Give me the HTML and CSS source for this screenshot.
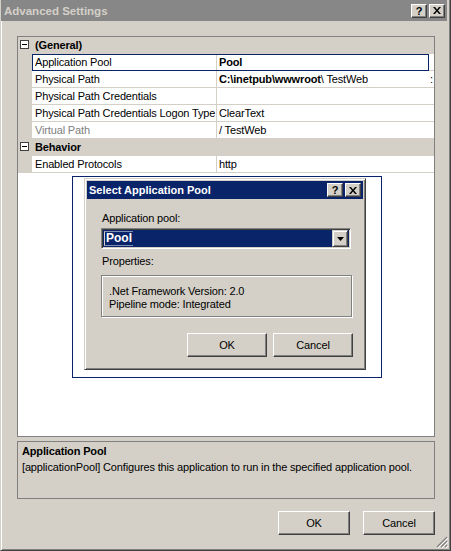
FILE: index.html
```html
<!DOCTYPE html>
<html>
<head>
<meta charset="utf-8">
<link rel="stylesheet" href="styles.css">
</head>
<body>
<div class="window">
  <div class="titlebar">
    <span class="title">Advanced Settings</span>
    <div class="capbtns">
      <span class="capbtn help">?</span>
      <span class="capbtn close"><svg width="8" height="7" viewBox="0 0 8 7"><path d="M0 0L2 0L4 2.5L6 0L8 0L5 3.5L8 7L6 7L4 4.5L2 7L0 7L3 3.5Z" fill="#000"/></svg></span>
    </div>
  </div>
  <div class="content">
    <div class="grid">
      <div class="row cat">
        <span class="margin"><span class="toggle"></span></span>
        <span class="catname">(General)</span>
      </div>
      <div class="row selected">
        <span class="margin"></span>
        <span class="label">Application Pool</span>
        <span class="value"><b>Pool</b></span>
      </div>
      <div class="row">
        <span class="margin"></span>
        <span class="label">Physical Path</span>
        <span class="value"><b>C:\inetpub\wwwroot</b>\ TestWeb<span class="trunc">:</span></span>
      </div>
      <div class="row">
        <span class="margin"></span>
        <span class="label">Physical Path Credentials</span>
        <span class="value"></span>
      </div>
      <div class="row">
        <span class="margin"></span>
        <span class="label">Physical Path Credentials Logon Type</span>
        <span class="value">ClearText</span>
      </div>
      <div class="row">
        <span class="margin"></span>
        <span class="label disabled">Virtual Path</span>
        <span class="value">/ TestWeb</span>
      </div>
      <div class="row cat">
        <span class="margin"><span class="toggle"></span></span>
        <span class="catname">Behavior</span>
      </div>
      <div class="row">
        <span class="margin"></span>
        <span class="label">Enabled Protocols</span>
        <span class="value">http</span>
      </div>

      <div class="focusrect">
        <div class="dialog">
          <div class="dtitlebar">
            <span class="dtitle">Select Application Pool</span>
            <div class="capbtns">
              <span class="capbtn help">?</span>
              <span class="capbtn close"><svg width="8" height="7" viewBox="0 0 8 7"><path d="M0 0L2 0L4 2.5L6 0L8 0L5 3.5L8 7L6 7L4 4.5L2 7L0 7L3 3.5Z" fill="#000"/></svg></span>
            </div>
          </div>
          <div class="dbody">
            <div class="dlabel">Application pool:</div>
            <div class="combo">
              <span class="combotext"><span class="focus">Pool</span></span>
              <span class="dropbtn"><svg width="7" height="4" viewBox="0 0 7 4"><path d="M0 0H7L3.5 4Z" fill="#000"/></svg></span>
            </div>
            <div class="dlabel props">Properties:</div>
            <div class="groupbox">
              <div>.Net Framework Version: 2.0</div>
              <div>Pipeline mode: Integrated</div>
            </div>
            <div class="dbuttons">
              <span class="btn dbtn">OK</span>
              <span class="btn dbtn">Cancel</span>
            </div>
          </div>
        </div>
      </div>
    </div>
    <div class="desc">
      <div class="desctitle">Application Pool</div>
      <div class="desctext">[applicationPool] Configures this application to run in the specified application pool.</div>
    </div>
    <div class="buttons">
      <span class="btn">OK</span>
      <span class="btn">Cancel</span>
    </div>
  </div>
  <svg class="grip" width="12" height="12" viewBox="0 0 12 12">
    <path d="M11 1L1 11M11 5L5 11M11 9L9 11" stroke="#808080" stroke-width="1.2"/>
    <path d="M12 2L2 12M12 6L6 12M12 10L10 12" stroke="#fff" stroke-width="1"/>
  </svg>
</div>
</body>
</html>
```
FILE: styles.css
```css
html, body {
  margin: 0;
  padding: 0;
  background: #d4d0c8;
}
body {
  font-family: "Liberation Sans", Arial, sans-serif;
  font-size: 11px;
  letter-spacing: -0.15px;
  color: #000;
}
.window {
  position: relative;
  width: 451px;
  height: 551px;
  box-sizing: border-box;
  background: #d4d0c8;
  border-left: 1px solid #d4d0c8;
  border-right: 1px solid #404040;
  border-bottom: 1px solid #404040;
  box-shadow: inset 1px 0 #fff, inset -1px -1px #808080;
}
.titlebar {
  height: 21px;
  margin-right: 3px;
  background: #878787;
  display: flex;
  align-items: center;
  justify-content: space-between;
  padding-left: 3px;
  padding-right: 2px;
}
.title {
  color: #d4d0c8;
  font-weight: bold;
  font-size: 11.5px;
  letter-spacing: 0;
}
.capbtns {
  display: flex;
  gap: 2px;
}
.capbtn {
  width: 16px;
  height: 14px;
  box-sizing: border-box;
  background: #d4d0c8;
  border: 1px solid;
  border-color: #fff #404040 #404040 #fff;
  box-shadow: inset -1px -1px #808080;
  display: flex;
  align-items: center;
  justify-content: center;
  font-weight: bold;
  font-size: 11px;
  line-height: 12px;
}
.content {
  padding: 15px 15px 0 16px;
}
.grid {
  position: relative;
  height: 401px;
  box-sizing: border-box;
  border: 1px solid #808080;
  background: #fff;
}
.row {
  position: relative;
  display: flex;
  height: 16px;
  line-height: 16px;
  border-bottom: 1px solid #d4d0c8;
  white-space: nowrap;
}
.row .margin {
  width: 14px;
  flex: none;
  background: #d4d0c8;
  position: relative;
}
.row .label {
  width: 185px;
  flex: none;
  box-sizing: border-box;
  padding-left: 3px;
  border-right: 1px solid #d4d0c8;
  overflow: hidden;
}
.row .label.disabled {
  color: #808080;
}
.row .value {
  flex: 1;
  padding-left: 2px;
  position: relative;
  overflow: hidden;
}
.trunc {
  position: absolute;
  right: 1px;
  top: 0;
}
.row.cat {
  background: #d4d0c8;
}
.catname {
  font-weight: bold;
  padding-left: 3px;
}
.toggle {
  position: absolute;
  left: 2px;
  top: 3px;
  width: 9px;
  height: 9px;
  box-sizing: border-box;
  border: 1px solid #404040;
  background: #fff;
}
.toggle::after {
  content: "";
  position: absolute;
  left: 1px;
  top: 3px;
  width: 5px;
  height: 1px;
  background: #000;
}
.row.selected::after {
  content: "";
  position: absolute;
  left: 14px;
  top: 0;
  width: 397px;
  height: 17px;
  box-sizing: border-box;
  border: 1px solid #0a246a;
}
.focusrect {
  position: absolute;
  left: 54px;
  top: 139px;
  width: 310px;
  height: 202px;
  box-sizing: border-box;
  border: 1px solid #0a246a;
  padding: 1px 0 0 11px;
}
.dialog {
  width: 282px;
  height: 192px;
  box-sizing: border-box;
  background: #d4d0c8;
  border: 1px solid;
  border-color: #d4d0c8 #404040 #404040 #d4d0c8;
  box-shadow: inset 1px 1px #fff, inset -1px -1px #808080;
  padding: 2px;
}
.dtitlebar {
  height: 18px;
  background: #0a246a;
  display: flex;
  align-items: center;
  justify-content: space-between;
  padding: 0 2px 0 2px;
}
.dtitle {
  color: #fff;
  font-weight: bold;
  letter-spacing: 0;
}
.dbody {
  padding: 11px 12px 0 14px;
}
.dlabel {
  height: 16px;
  line-height: 16px;
  padding-left: 1px;
}
.combo {
  margin-top: 2px;
  height: 21px;
  width: 250px;
  box-sizing: border-box;
  border: 1px solid;
  border-color: #808080 #fff #fff #808080;
  box-shadow: inset 1px 1px #404040, inset -1px -1px #d4d0c8;
  background: #0a246a;
  display: flex;
  align-items: center;
  padding: 2px;
}
.combotext {
  flex: 1;
  color: #fff;
  font-weight: bold;
  font-size: 12px;
  line-height: 15px;
  letter-spacing: 0;
}
.focus {
  display: inline-block;
  padding: 0 1px;
  border-left: 1px solid #d4d0c8;
  border-top: 1px solid #8090b0;
  border-bottom: 1px solid #8090b0;
  line-height: 13px;
}
.dropbtn {
  width: 16px;
  height: 17px;
  box-sizing: border-box;
  background: #d4d0c8;
  border: 1px solid;
  border-color: #d4d0c8 #404040 #404040 #d4d0c8;
  box-shadow: inset 1px 1px #fff, inset -1px -1px #808080;
  display: flex;
  align-items: center;
  justify-content: center;
}
.props {
  margin-top: 4px;
}
.groupbox {
  margin-top: 6px;
  width: 251px;
  height: 42px;
  box-sizing: border-box;
  border: 1px solid #808080;
  box-shadow: inset 1px 1px #fff, 1px 1px #fff;
  padding: 9px 0 0 7px;
  line-height: 13px;
}
.dbuttons {
  display: flex;
  justify-content: flex-end;
  gap: 6px;
  margin-top: 16px;
  width: 252px;
}
.btn {
  width: 72px;
  height: 24px;
  box-sizing: border-box;
  background: #d4d0c8;
  border: 1px solid;
  border-color: #fff #404040 #404040 #fff;
  box-shadow: inset -1px -1px #808080;
  display: flex;
  align-items: center;
  justify-content: center;
}
.dbtn {
  width: 80px;
}
.desc {
  margin-top: 4px;
  height: 58px;
  box-sizing: border-box;
  border: 1px solid #808080;
  padding: 2px 0 0 4px;
}
.desctitle {
  font-weight: bold;
  line-height: 15px;
}
.desctext {
  line-height: 16px;
}
.buttons {
  display: flex;
  justify-content: flex-end;
  gap: 13px;
  margin-top: 12px;
}
.grip {
  position: absolute;
  right: 2px;
  bottom: 2px;
}
```
